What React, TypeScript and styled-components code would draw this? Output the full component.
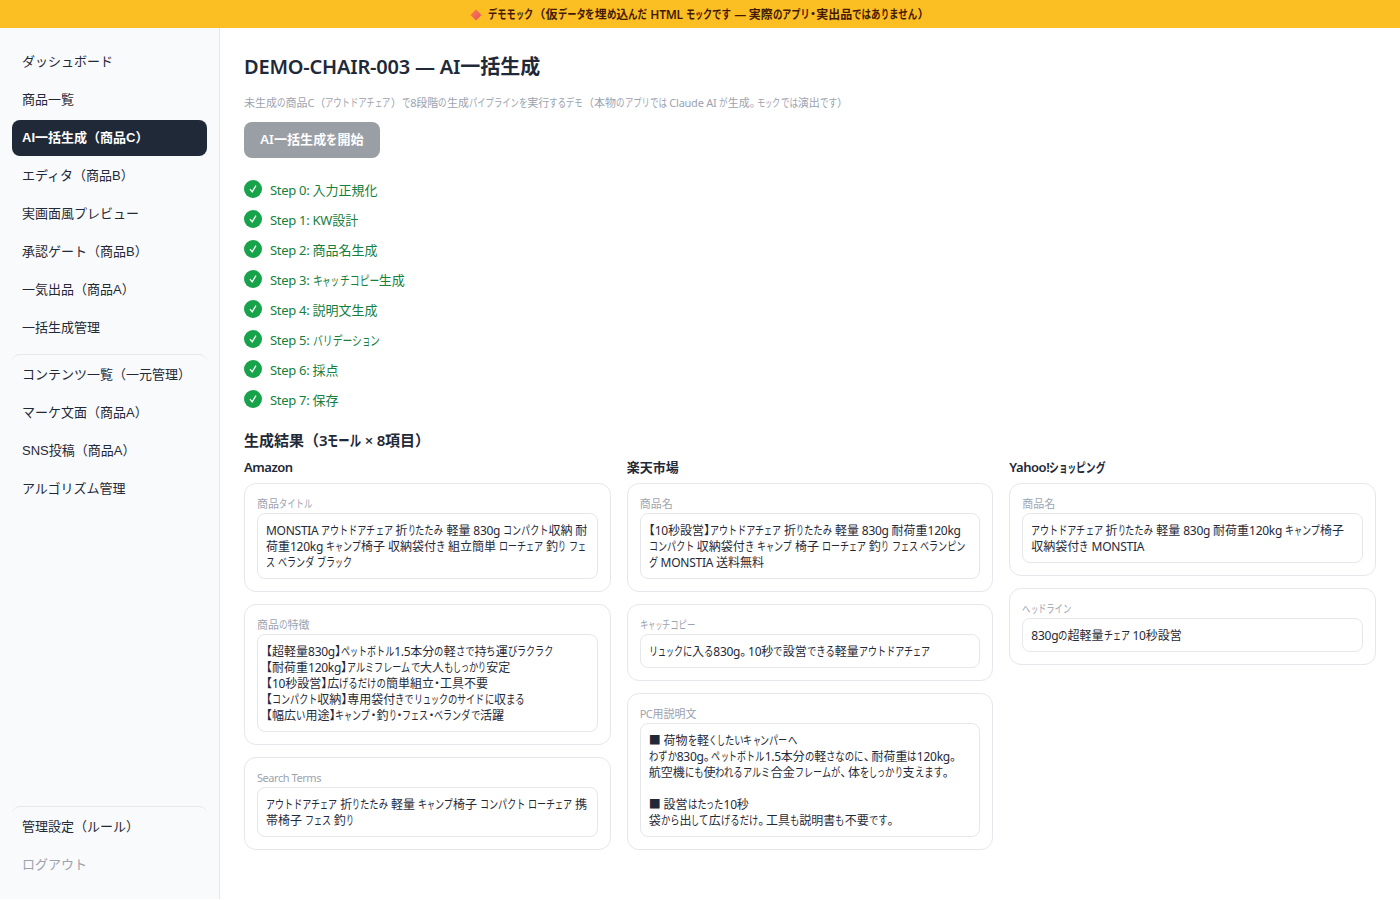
import React from 'react';
import styled, { createGlobalStyle, css } from 'styled-components';

const GlobalStyle = createGlobalStyle`
  * { box-sizing: border-box; }
  body {
    margin: 0;
    background: #ffffff;
    color: #1f2937;
    font-family: "Noto Sans", "Noto Sans CJK JP", sans-serif;
    font-size: 13px;
  }
  h1, h2, h3, p { margin: 0; }
`;

/* ---------- Proportional Japanese text ---------- */

const KanaRun = styled.span<{ $count: number; $scale: number }>`
  display: inline-block;
  width: ${(p) => (p.$count * p.$scale).toFixed(4)}em;
  white-space: nowrap;
  letter-spacing: 0;
  transform: scaleX(${(p) => p.$scale});
  transform-origin: 0 50%;
`;

const Punctuation = styled.span<{ $gap?: boolean }>`
  font-feature-settings: 'halt';
  letter-spacing: ${(p) => (p.$gap ? '0.15em' : '0')};
`;

const Latin = styled.span<{ $track: number }>`
  letter-spacing: ${(p) => p.$track}em;
`;

const TOKENS =
  /([ぁぃぅぇぉっゃゅょりしくァィゥェォッャュョ]+)|([ぁ-ん]+?(?=[ぁぃぅぇぉっゃゅょりしく]|[^ぁ-ん]|$))|([ァ-ヴー]+?(?=[ァィゥェォッャュョ]|[^ァ-ヴー]|$))|([。、]+)|([【】・]+)|([\x20-\x7e—×]+)|([^ぁ-んァ-ヴー。、【】・\x20-\x7e—×]+)/g;

function Jp({ children, kana = 1, track = -0.022 }: { children: string; kana?: number; track?: number }) {
  return (
    <>
      {Array.from(children.matchAll(TOKENS)).map((m, i) => {
        if (m[1]) return <KanaRun key={i} $count={m[1].length} $scale={0.66 * kana}>{m[1]}</KanaRun>;
        if (m[2]) return <KanaRun key={i} $count={m[2].length} $scale={0.78 * kana}>{m[2]}</KanaRun>;
        if (m[3]) return <KanaRun key={i} $count={m[3].length} $scale={0.755 * kana}>{m[3]}</KanaRun>;
        if (m[4]) return <Punctuation key={i} $gap>{m[4]}</Punctuation>;
        if (m[5]) return <Punctuation key={i}>{m[5]}</Punctuation>;
        if (m[6]) return <Latin key={i} $track={track}>{m[6]}</Latin>;
        return <React.Fragment key={i}>{m[7]}</React.Fragment>;
      })}
    </>
  );
}

/* ---------- Banner ---------- */

const Banner = styled.div`
  height: 28px;
  display: flex;
  align-items: center;
  justify-content: center;
  gap: 6px;
  padding-top: 1px;
  background: #fbbf24;
  color: #451a03;
  font-size: 12px;
  font-weight: 600;
  line-height: 16px;
  white-space: nowrap;
`;

const Shell = styled.div`
  display: flex;
  height: 871px;
`;

/* ---------- Sidebar ---------- */

const Sidebar = styled.nav`
  width: 220px;
  flex: none;
  display: flex;
  flex-direction: column;
  gap: 2px;
  padding: 16px 12px;
  background: #f9fafb;
  border-right: 1px solid #e5e7eb;
`;

const Spacer = styled.div`
  flex: 1;
`;

const NavItem = styled.button<{ $active?: boolean; $divided?: boolean; $muted?: boolean }>`
  display: block;
  width: 100%;
  height: 36px;
  padding: 10px;
  border: 0;
  border-radius: 8px;
  background: transparent;
  color: ${(p) => (p.$muted ? '#9ca3af' : '#1f2937')};
  font-family: 'Liberation Sans', 'Noto Sans CJK JP', sans-serif;
  font-size: 13px;
  line-height: 16px;
  text-align: left;
  white-space: nowrap;
  ${(p) =>
    p.$active &&
    css`
      background: #1f2937;
      color: #ffffff;
      font-weight: 600;
    `}
  ${(p) =>
    p.$divided &&
    css`
      height: 39px;
      margin-top: 6px;
      padding-top: 12px;
      border-top: 1px solid #e5e7eb;
    `}
`;

/* ---------- Main column ---------- */

const Main = styled.main`
  flex: 1;
  min-width: 0;
  padding: 24px;
`;

const Title = styled.h1`
  font-size: 20px;
  font-weight: 600;
  line-height: 30px;
`;

const Lead = styled.p`
  margin-top: 12px;
  color: #9ca3af;
  font-size: 11px;
  line-height: 18px;
  white-space: nowrap;
`;

const RunButton = styled.button`
  display: block;
  width: 136px;
  height: 36px;
  margin-top: 10px;
  padding: 0 0 2px;
  border: 0;
  border-radius: 8px;
  background: #9a9ea5;
  color: #ffffff;
  font-family: inherit;
  font-size: 13px;
  font-weight: 600;
  line-height: 18px;
  letter-spacing: 0.1px;
  white-space: nowrap;
`;

const StepList = styled.div`
  display: flex;
  flex-direction: column;
  gap: 12px;
  margin-top: 22px;
`;

const Step = styled.div`
  display: flex;
  align-items: center;
  gap: 8px;
  height: 18px;
  color: #15803d;
  line-height: 18px;
`;

const StepLabel = styled.span`
  padding-top: 1px;
`;

const StepBadge = styled.span`
  display: grid;
  place-items: center;
  width: 18px;
  height: 18px;
  border-radius: 50%;
  background: #16a34a;
`;

const SectionTitle = styled.h2`
  margin-top: 22px;
  font-size: 15px;
  font-weight: 600;
  line-height: 20px;
`;

const Malls = styled.div`
  display: grid;
  grid-template-columns: repeat(3, 1fr);
  align-items: start;
  gap: 16px;
  margin-top: 8px;
`;

const Mall = styled.section`
  display: flex;
  flex-direction: column;
  gap: 12px;
`;

const MallName = styled.h3`
  margin-bottom: -5px;
  font-size: 13px;
  font-weight: 600;
  line-height: 18px;
`;

const Card = styled.article`
  padding: 12px;
  border: 1px solid #e5e7eb;
  border-radius: 12px;
`;

const FieldLabel = styled.div`
  height: 17px;
  color: #9ca3af;
  font-size: 11px;
  line-height: 15px;
`;

const FieldValue = styled.div`
  padding: 9px 8px 7px;
  border: 1px solid #e5e7eb;
  border-radius: 8px;
  font-size: 12px;
  line-height: 16px;
  white-space: nowrap;
`;

const Line = styled.div`
  height: 16px;
`;

const nav = [
  'ダッシュボード',
  '商品一覧',
  'AI一括生成（商品C）',
  'エディタ（商品B）',
  '実画面風プレビュー',
  '承認ゲート（商品B）',
  '一気出品（商品A）',
  '一括生成管理',
];
const contentNav = ['コンテンツ一覧（一元管理）', 'マーケ文面（商品A）', 'SNS投稿（商品A）', 'アルゴリズム管理'];

const steps = ['入力正規化', 'KW設計', '商品名生成', 'キャッチコピー生成', '説明文生成', 'バリデーション', '採点', '保存'];

const malls = [
  {
    name: 'Amazon',
    fields: [
      {
        label: '商品タイトル',
        lines: [
          'MONSTIA アウトドアチェア 折りたたみ 軽量 830g コンパクト収納 耐',
          '荷重120kg キャンプ椅子 収納袋付き 組立簡単 ローチェア 釣り フェ',
          'ス ベランダ ブラック',
        ],
      },
      {
        label: '商品の特徴',
        lines: [
          '【超軽量830g】ペットボトル1.5本分の軽さで持ち運びラクラク',
          '【耐荷重120kg】アルミフレームで大人もしっかり安定',
          '【10秒設営】広げるだけの簡単組立・工具不要',
          '【コンパクト収納】専用袋付きでリュックのサイドに収まる',
          '【幅広い用途】キャンプ・釣り・フェス・ベランダで活躍',
        ],
      },
      {
        label: 'Search Terms',
        lines: ['アウトドアチェア 折りたたみ 軽量 キャンプ椅子 コンパクト ローチェア 携', '帯椅子 フェス 釣り'],
      },
    ],
  },
  {
    name: '楽天市場',
    fields: [
      {
        label: '商品名',
        lines: [
          '【10秒設営】アウトドアチェア 折りたたみ 軽量 830g 耐荷重120kg',
          'コンパクト 収納袋付き キャンプ 椅子 ローチェア 釣り フェス ベランピン',
          'グ MONSTIA 送料無料',
        ],
      },
      { label: 'キャッチコピー', lines: ['リュックに入る830g。10秒で設営できる軽量アウトドアチェア'] },
      {
        label: 'PC用説明文',
        lines: [
          '■ 荷物を軽くしたいキャンパーへ',
          'わずか830g。ペットボトル1.5本分の軽さなのに、耐荷重は120kg。',
          '航空機にも使われるアルミ合金フレームが、体をしっかり支えます。',
          '',
          '■ 設営はたった10秒',
          '袋から出して広げるだけ。工具も説明書も不要です。',
        ],
      },
    ],
  },
  {
    name: 'Yahoo!ショッピング',
    fields: [
      {
        label: '商品名',
        lines: ['アウトドアチェア 折りたたみ 軽量 830g 耐荷重120kg キャンプ椅子', '収納袋付き MONSTIA'],
      },
      { label: 'ヘッドライン', lines: ['830gの超軽量チェア 10秒設営'] },
    ],
  },
];

function Diamond() {
  return (
    <svg width="12" height="12" viewBox="0 0 12 12">
      <defs>
        <linearGradient id="diamond" x1="0" y1="0" x2="1" y2="1">
          <stop offset="0" stopColor="#fb8050" />
          <stop offset="1" stopColor="#ea4f5a" />
        </linearGradient>
      </defs>
      <path d="M6 0.5 11.5 6 6 11.5 0.5 6Z" fill="url(#diamond)" />
    </svg>
  );
}

function Check() {
  return (
    <svg width="10" height="10" viewBox="0 0 10 10" fill="none" stroke="#fff" strokeWidth="1.3">
      <path d="M2 5.2 4.2 7.8 8 1.6" />
    </svg>
  );
}

export default function App() {
  return (
    <>
      <GlobalStyle />
      <Banner>
        <Diamond />
        <span>
          <Jp kana={1.02}>デモモック（仮データを埋め込んだ HTML モックです — 実際のアプリ・実出品ではありません）</Jp>
        </span>
      </Banner>
      <Shell>
        <Sidebar>
          {nav.map((label, i) => (
            <NavItem key={label} $active={i === 2}>{label}</NavItem>
          ))}
          {contentNav.map((label, i) => (
            <NavItem key={label} $divided={i === 0}>{label}</NavItem>
          ))}
          <Spacer />
          <NavItem $divided>管理設定（ルール）</NavItem>
          <NavItem $muted>ログアウト</NavItem>
        </Sidebar>
        <Main>
          <Title><Jp track={-0.01}>DEMO-CHAIR-003 — AI一括生成</Jp></Title>
          <Lead>
            <Jp>未生成の商品C（アウトドアチェア）で8段階の生成パイプラインを実行するデモ（本物のアプリでは Claude AI が生成。モックでは演出です）</Jp>
          </Lead>
          <RunButton><Jp kana={1.1} track={0}>AI一括生成を開始</Jp></RunButton>
          <StepList>
            {steps.map((name, i) => (
              <Step key={name}>
                <StepBadge><Check /></StepBadge>
                <StepLabel><Jp>{`Step ${i}: ${name}`}</Jp></StepLabel>
              </Step>
            ))}
          </StepList>
          <SectionTitle><Jp>生成結果（3モール × 8項目）</Jp></SectionTitle>
          <Malls>
            {malls.map((mall) => (
              <Mall key={mall.name}>
                <MallName><Jp track={-0.035}>{mall.name}</Jp></MallName>
                {mall.fields.map((field) => (
                  <Card key={field.label}>
                    <FieldLabel><Jp track={-0.04}>{field.label}</Jp></FieldLabel>
                    <FieldValue>
                      {field.lines.map((line, i) => (
                        <Line key={i}><Jp>{line}</Jp></Line>
                      ))}
                    </FieldValue>
                  </Card>
                ))}
              </Mall>
            ))}
          </Malls>
        </Main>
      </Shell>
    </>
  );
}
